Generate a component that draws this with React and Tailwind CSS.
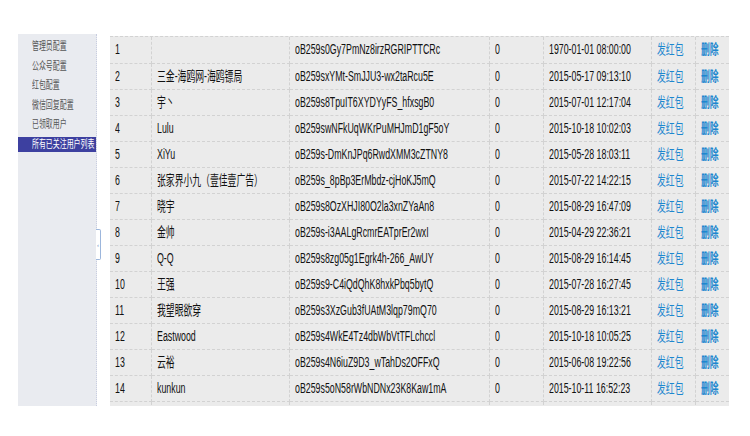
import React from "react";

const menu = ["管理员配置", "公众号配置", "红包配置", "微信回复配置", "已领取用户", "所有已关注用户列表"];

const rows = [
  ["1", "", "oB259s0Gy7PmNz8irzRGRIPTTCRc", "0", "1970-01-01 08:00:00"],
  ["2", "三金-海鸥网-海鸥镖局", "oB259sxYMt-SmJJU3-wx2taRcu5E", "0", "2015-05-17 09:13:10"],
  ["3", "宇丶", "oB259s8TpuIT6XYDYyFS_hfxsgB0", "0", "2015-07-01 12:17:04"],
  ["4", "Lulu", "oB259swNFkUqWKrPuMHJmD1gF5oY", "0", "2015-10-18 10:02:03"],
  ["5", "XiYu", "oB259s-DmKnJPq6RwdXMM3cZTNY8", "0", "2015-05-28 18:03:11"],
  ["6", "张家界小九（壹佳壹广告）", "oB259s_8pBp3ErMbdz-cjHoKJ5mQ", "0", "2015-07-22 14:22:15"],
  ["7", "晓宇", "oB259s8OzXHJI80O2la3xnZYaAn8", "0", "2015-08-29 16:47:09"],
  ["8", "金帅", "oB259s-i3AALgRcmrEATprEr2wxI", "0", "2015-04-29 22:36:21"],
  ["9", "Q-Q", "oB259s8zg05g1Egrk4h-266_AwUY", "0", "2015-08-29 16:14:45"],
  ["10", "王强", "oB259s9-C4iQdQhK8hxkPbq5bytQ", "0", "2015-07-28 16:27:45"],
  ["11", "我望眼欲穿", "oB259s3XzGub3fUAtM3lqp79mQ70", "0", "2015-08-29 16:13:21"],
  ["12", "Eastwood", "oB259s4WkE4Tz4dbWbVtTFLchccl", "0", "2015-10-18 10:05:25"],
  ["13", "云裕", "oB259s4N6iuZ9D3_wTahDs2OFFxQ", "0", "2015-06-08 19:22:56"],
  ["14", "kunkun", "oB259s5oN58rWbNDNx23K8Kaw1mA", "0", "2015-10-11 16:52:23"],
  ["", "", "", "", ""],
];

const font = { fontFamily: '"Liberation Sans", Arial, "Noto Sans CJK SC", sans-serif' };

// the screenshot text is squeezed sideways, so every label is narrowed
function Narrow({ children, className = "" }) {
  return <span className={"inline-block whitespace-nowrap scale-x-[0.63] origin-left " + className}>{children}</span>;
}

function Cell({ children, last }) {
  return (
    <td className={"h-[26px] pl-[5px] border-b border-dashed border-[#d2d2d2] overflow-hidden " + (last ? "" : "border-r")}>
      {children}
    </td>
  );
}

export default function App() {
  return (
    <div className="w-[750px] h-[436px] bg-white pt-[34px] pl-[18px] flex" style={font}>
      <div className="relative w-[79px] h-[372px] bg-[#e9ebf0] border-r border-dotted border-[#c8cde0] pt-[5px]">
        {menu.map((m, i) => (
          <div
            key={m}
            className={
              "h-[15px] mb-[4.6px] pl-[14px] text-[11px] leading-[15px] overflow-hidden " +
              (i === 5 ? "bg-[#3d40a0] text-white" : "text-[#555]")
            }
          >
            <Narrow>{m}</Narrow>
          </div>
        ))}
        <div className="absolute -right-[5px] top-[195px] w-[5px] h-[31px] border border-l-0 border-[#9cb6dc] rounded-r-[2px] bg-white flex items-center justify-center">
          <span className="text-[6px] leading-none text-[#6a8cc0]">‹</span>
        </div>
      </div>
      <div className="ml-[13px] mt-[2px] w-[619px] h-[370px] overflow-hidden bg-[#ebebeb] border-t border-dashed border-[#d2d2d2]">
        <table className="table-fixed border-collapse w-[619px] text-[14px] text-[#111]">
          <colgroup>
            <col className="w-[41px]" />
            <col className="w-[138px]" />
            <col className="w-[200px]" />
            <col className="w-[54px]" />
            <col className="w-[108px]" />
            <col className="w-[44px]" />
            <col className="w-[34px]" />
          </colgroup>
          <tbody>
            {rows.map((r, i) => (
              <tr key={i}>
                <Cell><Narrow>{r[0]}</Narrow></Cell>
                <Cell><Narrow>{r[1]}</Narrow></Cell>
                <Cell><Narrow>{r[2]}</Narrow></Cell>
                <Cell><Narrow>{r[3]}</Narrow></Cell>
                <Cell><Narrow>{r[4]}</Narrow></Cell>
                <Cell>
                  <Narrow className="text-[#1d87cf]">发红包</Narrow>
                </Cell>
                <Cell last>
                  <Narrow className="text-[#1d87cf] font-bold">删除</Narrow>
                </Cell>
              </tr>
            ))}
          </tbody>
        </table>
      </div>
    </div>
  );
}
